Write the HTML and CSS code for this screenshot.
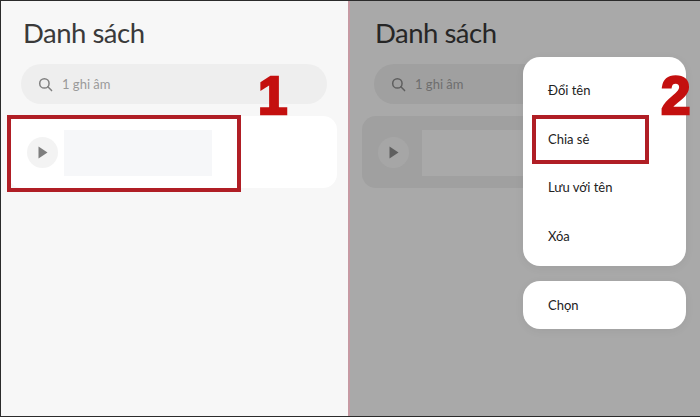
FILE: index.html
```html
<!DOCTYPE html>
<html lang="vi">
<head>
<meta charset="utf-8">
<title>Danh sách</title>
<link rel="stylesheet" href="styles.css">
</head>
<body>
<main class="shot">
  <section class="panel panel-light">
    <h1 class="title">Danh sách</h1>
    <div class="search">
      <svg class="search-icon" viewBox="0 0 16 16"><circle cx="6.8" cy="6.8" r="5" /><path d="M10.5 10.5L14.5 14.5" /></svg>
      <span>1 ghi âm</span>
    </div>
    <div class="item">
      <span class="play"><svg viewBox="0 0 10 13"><path d="M0.5 0.5L9.5 6.5L0.5 12.5Z" /></svg></span>
      <span class="thumb"></span>
    </div>
    <div class="mark mark-one"></div>
    <div class="num num-one">1</div>
  </section>
  <div class="divider"></div>
  <section class="panel panel-dim">
    <h1 class="title">Danh sách</h1>
    <div class="search">
      <svg class="search-icon" viewBox="0 0 16 16"><circle cx="6.8" cy="6.8" r="5" /><path d="M10.5 10.5L14.5 14.5" /></svg>
      <span>1 ghi âm</span>
    </div>
    <div class="item">
      <span class="play"><svg viewBox="0 0 10 13"><path d="M0.5 0.5L9.5 6.5L0.5 12.5Z" /></svg></span>
      <span class="thumb"></span>
    </div>
    <div class="menu">
      <ul class="menu-card menu-main">
        <li>Đổi tên</li>
        <li>Chia sẻ</li>
        <li>Lưu với tên</li>
        <li>Xóa</li>
      </ul>
      <ul class="menu-card menu-single">
        <li>Chọn</li>
      </ul>
    </div>
    <div class="mark mark-two"></div>
    <div class="num num-two">2</div>
  </section>
</main>
</body>
</html>
```
FILE: styles.css
```css
* { box-sizing: border-box; }
html, body { margin: 0; padding: 0; }
body { width: 700px; height: 417px; overflow: hidden; background: #333; font-family: "Lato", "Noto Sans", sans-serif; }
.shot { display: flex; width: 700px; height: 417px; padding: 1px 0 1px 1px; background: #2b2b2b; }
.panel { position: relative; height: 100%; display: flex; flex-direction: column; }
.panel-light { width: 347px; background: #f7f7f7; padding: 0 12px 0 7px; color: #3a3a3a; }
.divider { width: 2px; background: #c69aa3; }
.panel-dim { width: 350px; background: #a9a9a9; padding: 0 12px 0 12px; color: #262626; }
.title { margin: 17px 0 0 15px; font-size: 27.5px; line-height: 30px; font-weight: 400; letter-spacing: -0.5px; }
.search { display: flex; align-items: center; gap: 9px; height: 40px; margin: 16px 0 0 13px; padding-left: 17px; width: 306px; border-radius: 20px; font-size: 13px; background: #eeeeee; color: #9a9a9a; }
.panel-dim .title { margin-left: 13px; }
.panel-dim .search { margin-left: 12px; }
.search-icon { width: 15px; height: 15px; fill: none; stroke: #808080; stroke-width: 1.6; stroke-linecap: round; }
.item { display: flex; align-items: center; gap: 6px; height: 72px; margin-top: 12px; padding: 1px 0 0 19px; width: 329px; border-radius: 14px; background: #ffffff; }
.play { display: flex; align-items: center; justify-content: center; width: 31px; height: 31px; border-radius: 50%; background: #f3f3f3; }
.play svg { width: 10px; height: 13px; fill: #7e7e7e; }
.thumb { width: 148px; height: 46px; background: #f6f7f9; }
.panel-dim .search { background: #a0a0a0; color: #6e6e6e; }
.panel-dim .search-icon { stroke: #5e5e5e; }
.panel-dim .item { gap: 13px; padding-left: 16px; width: 324px; background: #a0a0a0; }
.panel-dim .play { background: #a6a6a6; }
.panel-dim .play svg { fill: #5f5f5f; }
.panel-dim .thumb { background: #a9a9a9; }
.menu { position: absolute; left: 173px; top: 56px; width: 163px; }
.menu-card { list-style: none; margin: 0; padding: 0; background: #fff; border-radius: 17px; font-size: 13px; color: #222; box-shadow: 0 2px 10px rgba(0, 0, 0, 0.06); }
.menu-card li { padding-left: 25px; display: flex; align-items: center; }
.menu-main { height: 209px; padding-top: 9px; }
.menu-main li { height: 48.5px; }
.menu-single { height: 48px; margin-top: 15px; }
.menu-single li { height: 48px; }
.mark { position: absolute; border: 4px solid #b01e25; }
.mark-one { left: 6px; top: 114px; width: 234px; height: 77px; }
.mark-two { left: 182px; top: 114px; width: 117px; height: 49px; }
.num { position: absolute; color: #c4100f; font-family: "Liberation Sans", sans-serif; font-weight: 700; font-size: 53px; line-height: 55px; -webkit-text-stroke: 2.5px #c4100f; }
.num-one { left: 257px; top: 67px; }
.num-two { left: 311px; top: 67px; }
```
